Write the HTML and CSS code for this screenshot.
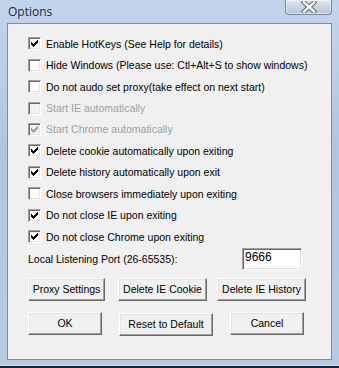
FILE: index.html
```html
<!DOCTYPE html>
<html lang="en">
    <head>
        <meta charset="UTF-8">
        <title>Options</title>
        <link rel="stylesheet" href="styles.css">
    </head>
    <body>
        <div class="window">
            <div class="titlebar">
                <span class="title">Options</span>
                <div class="close">
                    <svg width="16" height="12" viewBox="0 0 16 12">
                        <path d="M3 1.5 L13 10.5 M13 1.5 L3 10.5" stroke="#5b6573" stroke-width="4.5" stroke-linecap="square"/>
                        <path d="M3 1.5 L13 10.5 M13 1.5 L3 10.5" stroke="#ffffff" stroke-width="2.5" stroke-linecap="square"/>
                    </svg>
                </div>
            </div>
            <div class="client">
                <ul class="options">
                    <li class="option"><span class="box checked"></span>Enable HotKeys (See Help for details)</li>
                    <li class="option"><span class="box"></span>Hide Windows (Please use: Ctl+Alt+S to show windows)</li>
                    <li class="option"><span class="box"></span>Do not audo set proxy(take effect on next start)</li>
                    <li class="option disabled"><span class="box"></span>Start IE automatically</li>
                    <li class="option disabled"><span class="box checked"></span>Start Chrome automatically</li>
                    <li class="option"><span class="box checked"></span>Delete cookie automatically upon exiting</li>
                    <li class="option"><span class="box checked"></span>Delete history automatically upon exit</li>
                    <li class="option"><span class="box"></span>Close browsers immediately upon exiting</li>
                    <li class="option"><span class="box checked"></span>Do not close IE upon exiting</li>
                    <li class="option"><span class="box checked"></span>Do not close Chrome upon exiting</li>
                </ul>
                <div class="port-row">
                    <span class="port-label">Local Listening Port (26-65535):</span>
                    <input class="port" type="text" value="9666">
                </div>
                <div class="btn-row tools">
                    <button class="btn proxy">Proxy Settings</button>
                    <button class="btn cookie">Delete IE Cookie</button>
                    <button class="btn history">Delete IE History</button>
                </div>
                <div class="btn-row actions">
                    <button class="btn ok">OK</button>
                    <button class="btn reset">Reset to Default</button>
                    <button class="btn cancel">Cancel</button>
                </div>
            </div>
        </div>
    </body>
</html>
```

FILE: styles.css
```css
html, body { margin: 0; padding: 0; }
body {
    width: 339px;
    height: 368px;
    background: #1d2430;
    overflow: hidden;
}
* { box-sizing: border-box; }
.window {
    width: 339px;
    height: 366px;
    background: linear-gradient(180deg, #c3d5ec 0%, #b0c6e0 40%, #b7cbe4 100%);
    padding: 0 7px 5px 7px;
    display: flex;
    flex-direction: column;
    border-bottom: 1px solid #d3dff0;
}
.titlebar {
    height: 23px;
    display: flex;
    align-items: flex-start;
    justify-content: space-between;
}
.title {
    font-family: "Open Sans", sans-serif;
    font-size: 12px;
    color: #1e2a3a;
    padding: 3px 0 0 1px;
}
.close {
    width: 47px;
    height: 15px;
    border: 1px solid #7a879b;
    border-top: none;
    border-radius: 0 0 4px 4px;
    background: linear-gradient(180deg, #dde5ef 0%, #c9d4e3 50%, #b9c6d8 100%);
    box-shadow: inset 0 0 0 1px rgba(255,255,255,0.5);
    display: flex;
    justify-content: center;
    align-items: center;
}
.client {
    flex: 1;
    background: #f0f0f0;
    border: 1px solid #7b8ca4;
    padding: 9px 0 0 20px;
    font-family: "Liberation Sans", Arial, sans-serif;
    font-size: 10.5px;
    color: #000;
    display: flex;
    flex-direction: column;
}
.options {
    list-style: none;
    margin: 0;
    padding: 0;
}
.option {
    height: 21.45px;
    display: flex;
    align-items: center;
    white-space: nowrap;
}
.option.disabled { color: #a0a0a0; }
.box {
    width: 13px;
    height: 13px;
    margin-right: 5px;
    flex: none;
    background: #fff;
    border: 1px solid;
    border-color: #a0a0a0 #ffffff #ffffff #a0a0a0;
    box-shadow: inset 1px 1px 0 #696969, inset -1px -1px 0 #e3e3e3;
    position: relative;
}
.box.checked::after {
    content: "";
    position: absolute;
    left: 2px;
    top: 2px;
    width: 7px;
    height: 7px;
    background: no-repeat center / 7px 7px;
    background-image: url("data:image/svg+xml;utf8,<svg xmlns='http://www.w3.org/2000/svg' width='7' height='7' shape-rendering='crispEdges'><path d='M6 0h1v3h-1zM5 1h1v3h-1zM4 2h1v3h-1zM3 3h1v3h-1zM2 4h1v3h-1zM1 3h1v3h-1zM0 2h1v3h-1z' fill='black'/></svg>");
}
.disabled .box { background: #f0f0f0; }
.disabled .box.checked::after {
    background-image: url("data:image/svg+xml;utf8,<svg xmlns='http://www.w3.org/2000/svg' width='7' height='7' shape-rendering='crispEdges'><path d='M6 0h1v3h-1zM5 1h1v3h-1zM4 2h1v3h-1zM3 3h1v3h-1zM2 4h1v3h-1zM1 3h1v3h-1zM0 2h1v3h-1z' fill='%23a0a0a0'/></svg>");
}
.port-row {
    display: flex;
    align-items: center;
    height: 22px;
    margin-top: 1px;
}
.port-label { flex: none; width: 214px; }
.port {
    width: 60px;
    height: 22px;
    background: #fff;
    border: 1px solid;
    border-color: #a0a0a0 #ffffff #ffffff #a0a0a0;
    box-shadow: inset 1px 1px 0 #696969, inset -1px -1px 0 #e3e3e3;
    font-family: "Liberation Sans", Arial, sans-serif;
    font-size: 12px;
    padding: 0 0 4px 2px;
    outline: none;
    color: #000;
}
.btn-row {
    display: flex;
}
.tools { margin-top: 8px; }
.actions { margin-top: 11px; }
.btn {
    height: 23px;
    background: #f0f0f0;
    border: 1px solid;
    border-color: #ffffff #696969 #696969 #ffffff;
    box-shadow: inset -1px -1px 0 #a0a0a0, inset 1px 1px 0 #e3e3e3;
    font-family: "Liberation Sans", Arial, sans-serif;
    font-size: 10.5px;
    color: #000;
    padding: 0 0 2px 0;
    text-align: center;
}
.proxy { width: 77px; }
.cookie { width: 89px; margin-left: 13px; }
.history { width: 89px; margin-left: 10px; }
.ok { width: 74px; }
.reset { width: 94px; margin-left: 17px; margin-top: 1px; }
.cancel { width: 74px; margin-left: 17px; }
```
